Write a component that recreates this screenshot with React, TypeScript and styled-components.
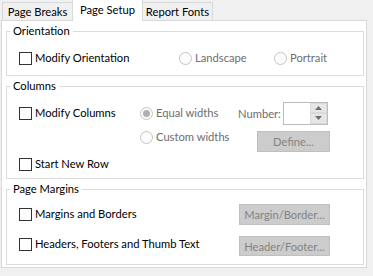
import React from "react";
import styled, { createGlobalStyle } from "styled-components";

const GlobalStyle = createGlobalStyle`
  html, body {
    margin: 0;
    padding: 0;
    background: #f0f0f0;
  }
  body {
    font-family: Lato, "Noto Sans", sans-serif;
    font-size: 11.2px;
    color: #000;
  }
`;

export default function App() {
  return (
    <>
      <GlobalStyle />
      <Dialog>
        <TabStrip>
          <Tab>Page Breaks</Tab>
          <Tab $active>Page Setup</Tab>
          <Tab>Report Fonts</Tab>
        </TabStrip>

        <Panel>
          <Group>
            <Legend>Orientation</Legend>
            <Row $h={24}>
              <Cell $w={160}>
                <Check label="Modify Orientation" />
              </Cell>
              <Cell $w={95}>
                <Radio label="Landscape" />
              </Cell>
              <Cell>
                <Radio label="Portrait" />
              </Cell>
            </Row>
          </Group>

          <Group $top={3} $bottom={2}>
            <Legend>Columns</Legend>
            <Row $h={24}>
              <Cell $w={121}>
                <Check label="Modify Columns" />
              </Cell>
              <Cell $w={98}>
                <Radio label="Equal widths" checked />
              </Cell>
              <Cell $w={45}>
                <Muted>Number:</Muted>
              </Cell>
              <Spin>
                <SpinField />
                <SpinButtons>
                  <SpinButton>
                    <Arrow viewBox="0 0 7 4">
                      <path d="M0 4 L3.5 0 L7 4 Z" />
                    </Arrow>
                  </SpinButton>
                  <SpinButton>
                    <Arrow viewBox="0 0 7 4">
                      <path d="M0 0 L3.5 4 L7 0 Z" />
                    </Arrow>
                  </SpinButton>
                </SpinButtons>
              </Spin>
            </Row>
            <Row $h={27} $align="flex-start">
              <Cell $w={121} />
              <Cell $w={117} $h={24}>
                <Radio label="Custom widths" />
              </Cell>
              <Button $w={73} $h={21} $mt={6}>Define...</Button>
            </Row>
            <Row $h={24}>
              <Cell>
                <Check label="Start New Row" />
              </Cell>
            </Row>
          </Group>

          <Group $top={3} $pad={6} $bottom={8} $gap={6}>
            <Legend>Page Margins</Legend>
            <Row $h={24}>
              <Cell $w={220}>
                <Check label="Margins and Borders" />
              </Cell>
              <Button $w={91} $h={21}>Margin/Border...</Button>
            </Row>
            <Row $h={24}>
              <Cell $w={220}>
                <Check label="Headers, Footers and Thumb Text" />
              </Cell>
              <Button $w={91} $h={20} $mt={4}>Header/Footer...</Button>
            </Row>
          </Group>
        </Panel>
      </Dialog>
    </>
  );
}

function Check({ label }: { label: string }) {
  return (
    <Option>
      <CheckBox />
      <span>{label}</span>
    </Option>
  );
}

function Radio({ label, checked }: { label: string; checked?: boolean }) {
  return (
    <Option $disabled>
      <RadioDot $checked={checked} />
      <span>{label}</span>
    </Option>
  );
}

const Dialog = styled.div`
  width: 366px;
  padding: 0 6px 0 1px;
`;

const TabStrip = styled.div`
  display: flex;
  align-items: flex-end;
  height: 21px;
  padding-left: 1px;
  margin-bottom: -1px;
`;

const Tab = styled.div<{ $active?: boolean }>`
  position: relative;
  z-index: ${(p) => (p.$active ? 2 : 1)};
  box-sizing: border-box;
  width: 71px;
  height: ${(p) => (p.$active ? "22px" : "19px")};
  margin-left: -1px;
  display: flex;
  align-items: center;
  justify-content: center;
  padding-bottom: ${(p) => (p.$active ? "2px" : "0")};
  border: 1px solid #d9d9d9;
  border-bottom: ${(p) => (p.$active ? "none" : "1px solid #d9d9d9")};
  background: ${(p) => (p.$active ? "#ffffff" : "#f0f0f0")};
  white-space: nowrap;

  &:first-child {
    margin-left: 0;
  }
`;

const Panel = styled.div`
  position: relative;
  z-index: 1;
  box-sizing: border-box;
  width: 366px;
  background: #fff;
  border: 1px solid #d9d9d9;
  padding: 3px 2px 2px 4px;
`;

const Group = styled.fieldset<{ $top?: number; $pad?: number; $bottom?: number; $gap?: number }>`
  margin: ${(p) => p.$top ?? 0}px 0 0 0;
  padding: ${(p) => p.$pad ?? 8}px 12px ${(p) => p.$bottom ?? 5}px;
  border: 1px solid #dcdcdc;
  min-width: 0;
  display: flex;
  flex-direction: column;
  gap: ${(p) => p.$gap ?? 0}px;
`;

const Legend = styled.legend`
  margin-left: -9px;
  padding: 0 3px;
  line-height: 14px;
`;

const Row = styled.div<{ $h: number; $align?: string }>`
  display: flex;
  align-items: ${(p) => p.$align ?? "center"};
  height: ${(p) => p.$h}px;
`;

const Cell = styled.div<{ $w?: number; $h?: number }>`
  flex: ${(p) => (p.$w ? `0 0 ${p.$w}px` : "1 1 auto")};
  display: flex;
  align-items: center;
  ${(p) => (p.$h ? `height: ${p.$h}px;` : "")}
`;

const Option = styled.label<{ $disabled?: boolean }>`
  display: flex;
  align-items: center;
  gap: 3px;
  white-space: nowrap;
  line-height: 14px;
  color: ${(p) => (p.$disabled ? "#6d6d6d" : "#000")};
`;

const CheckBox = styled.span`
  box-sizing: border-box;
  width: 13px;
  height: 13px;
  border: 1px solid #333;
  background: #fff;
`;

const RadioDot = styled.span<{ $checked?: boolean }>`
  box-sizing: border-box;
  width: 13px;
  height: 13px;
  border-radius: 50%;
  border: 1px solid #c4c4c4;
  background: #fcfcfc;
  display: flex;
  align-items: center;
  justify-content: center;

  &::after {
    content: "";
    display: ${(p) => (p.$checked ? "block" : "none")};
    width: 7px;
    height: 7px;
    border-radius: 50%;
    background: #b0b0b0;
  }
`;

const Muted = styled.span`
  color: #6d6d6d;
  white-space: nowrap;
`;

const Spin = styled.div`
  box-sizing: border-box;
  display: flex;
  width: 45px;
  height: 23px;
  border: 1px solid #bcbcbc;
  background: #fff;
`;

const SpinField = styled.div`
  flex: 1;
`;

const SpinButtons = styled.div`
  display: flex;
  flex-direction: column;
  width: 17px;
`;

const SpinButton = styled.div`
  flex: 1;
  display: flex;
  align-items: center;
  justify-content: center;
  background: #e6e6e6;
  border: 1px solid #dadada;
`;

const Arrow = styled.svg`
  width: 7px;
  height: 4px;
  fill: #6d6d6d;
`;

const Button = styled.div<{ $w: number; $h: number; $mt?: number }>`
  box-sizing: border-box;
  width: ${(p) => p.$w}px;
  height: ${(p) => p.$h}px;
  margin-top: ${(p) => p.$mt ?? 0}px;
  display: flex;
  align-items: center;
  justify-content: center;
  background: #cccccc;
  border: 1px solid #bfbfbf;
  color: #838383;
  white-space: nowrap;
`;
